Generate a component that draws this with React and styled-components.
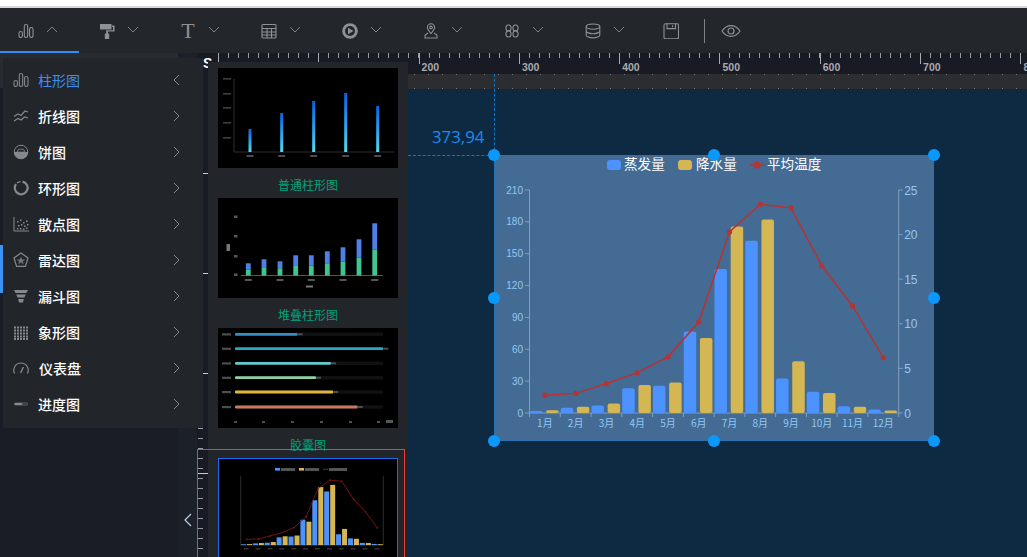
import React from "react";
import styled, { createGlobalStyle } from "styled-components";

const Global = createGlobalStyle`
  html, body { margin: 0; padding: 0; background: #181b24; }
  * { box-sizing: border-box; }
`;
const CJK = `"Noto Sans CJK SC", "Liberation Sans", sans-serif`;

const Page = styled.div`
  width: 1027px; height: 557px; overflow: hidden; display: flex; flex-direction: column;
  background: #fff; font-family: ${CJK};
`;
const TopStrip = styled.div`height: 8px; flex: none; background: #fff; border-bottom: 2px solid #d6d6d6;`;
const Toolbar = styled.div`
  height: 45px; flex: none; display: flex; align-items: stretch; background: #23262a; color: #8e9195;
`;
const ToolItem = styled.div`
  position: relative; width: 81px; flex: none; display: flex; align-items: center; gap: 12px;
  padding: 0 0 0 18px;
  ${p => p.$active && `&::after { content: ""; position: absolute; left: 0; bottom: 0; width: 79px; height: 2px; background: #2f8ff0; }`}
`;
const ToolIcon = styled.svg`width: ${p => p.$w || 16}px; height: 16px; flex: none; display: block;`;
const SerifT = styled.span`
  width: 16px; flex: none; text-align: center; font: 22px/16px "Liberation Serif", serif; color: #8e9195;
`;
const Caret = styled.svg`width: 12px; height: 7px; flex: none; margin-top: -3px; display: block;`;
const Divider = styled.div`width: 1px; height: 24px; background: #7e8185; align-self: center; margin-left: 25px;`;
const EyeItem = styled.div`display: flex; align-items: center; padding-left: 16px;`;
const SaveItem = styled.div`display: flex; align-items: center; padding-left: 15px;`;

const Workspace = styled.div`position: relative; flex: 1; display: flex; min-height: 0; background: #181b24;`;
const LeftRail = styled.div`position: relative; width: 178px; flex: none; background: #1a1d26;`;
const RailHead = styled.div`height: 35px; background: #282b32;`;
const RailMark = styled.div`position: absolute; left: 0; top: 192px; width: 3px; height: 48px; background: #3a93f2;`;
const CollapseRail = styled.div`
  width: 19px; flex: none; background: #1c2028; display: flex; justify-content: center; align-items: flex-end; padding-bottom: 30px;
`;
const Menu = styled.nav`
  position: absolute; left: 3px; top: 5px; width: 200px; height: 370px; z-index: 5;
  background: #22262a; padding-top: 4px; display: flex; flex-direction: column;
`;
const MenuRow = styled.div`
  height: 36px; flex: none; display: flex; align-items: center; padding: 0 23px 0 10px; color: ${p => (p.$active ? "#3a90ee" : "#fff")};
`;
const MenuIcon = styled.svg`width: 16px; height: 16px; flex: none; color: #85888c; display: block;`;
const MenuLabel = styled.span`
  flex: 1; font-size: 14px; line-height: 20px; margin-left: ${p => (p.$wide ? "10px" : "9px")}; font-weight: ${p => (p.$active ? 400 : 500)};
`;
const MenuChevron = styled.svg`width: 7px; height: 12px; flex: none; display: block; margin-top: -1px;`;

const Stage = styled.div`
  position: relative; flex: 1; min-width: 0; display: grid;
  grid-template-columns: 21px 1fr; grid-template-rows: 21px 15px 1fr;
`;
const Corner = styled.div`
  background: #181a24; color: #fff; font: bold 14px/14px "Liberation Sans", sans-serif; padding: 3px 0 0 6px; overflow: hidden;
`;
const TopRuler = styled.div`background: #181a24; display: flex; overflow: hidden;`;
const RulerSeg = styled.div`
  position: relative; width: 100.3px; flex: none; padding: 8px 0 0 3px;
  font: bold 10.5px/12px "Liberation Sans", sans-serif; color: #a9abae; 
  background: repeating-linear-gradient(90deg, #9a9ca0 0 1px, transparent 1px 10.03px) 0 0 / 100% 5px no-repeat;
  &::before { content: ""; position: absolute; left: 0; top: 0; width: 1px; height: 11px; background: #a9abae; }
`;
const LeftRuler = styled.div`
  grid-row: 2 / 4; background: #181a24;
  background-image:
    repeating-linear-gradient(180deg, #c9cacc 0 1px, transparent 1px 100px),
    repeating-linear-gradient(180deg, #9a9ca0 0 1px, transparent 1px 10px);
  background-size: 10px 100%, 5px 100%;
  background-position: 1px -1px, 1px 4px;
  background-repeat: no-repeat;
`;
const Band = styled.div`
  background-color: #2c2d31;
  background-image:
    repeating-linear-gradient(90deg, #7a7b7e 0 1px, transparent 1px 14px),
    repeating-linear-gradient(90deg, #7a7b7e 0 1px, transparent 1px 14px);
  background-size: 100% 1px, 100% 1px;
  background-position: 0 0, 0 14px;
  background-repeat: no-repeat;
`;
const Canvas = styled.div`position: relative; background: #0e2a43;`;
const GuideV = styled.div`
  position: absolute; left: 276px; top: -15px; height: 81px; border-left: 1px dashed #1377c0;
`;
const GuideH = styled.div`
  position: absolute; left: 190px; top: 66px; width: 86px; border-top: 1px dashed #1377c0;
`;
const Coord = styled.div`
  position: absolute; left: 214px; top: 36px; font: 16.8px/24px "Open Sans", "Liberation Sans", sans-serif; color: #1a8cf0;
`;
const Widget = styled.div`
  position: absolute; left: 276px; top: 66px; width: 440px; height: 286px; background: #436b93;
  outline: 1px dashed #1a78c4; outline-offset: -1px;
`;
const ChartSvg = styled.svg`position: absolute; left: 0; top: 0; width: 440px; height: 286px; display: block;`;
const Handle = styled.div`
  position: absolute; left: ${p => p.$x}%; top: ${p => p.$y}%; width: 12px; height: 12px; margin: -6px 0 0 -6px;
  border-radius: 50%; background: #0a98fb;
`;

const ThumbPanel = styled.aside`
  position: absolute; left: 11px; top: 9px; bottom: 0; width: 200px; background: #22262a; z-index: 4;
  display: flex; flex-direction: column; padding-top: 6px;
`;
const Thumb = styled.div`
  flex: none; width: 180px; margin-left: 10px; height: 130px; display: flex; flex-direction: column; align-items: center;
`;
const ThumbBox = styled.svg`
  width: 180px; height: 100px; flex: none; display: block; background: #000;
  & > * { filter: blur(0.4px); }
`;
const ThumbLabel = styled.div`
  font-size: 12px; line-height: 18px; margin-top: 8px; color: #00a278;
`;
const SelectedOutline = styled.div`
  position: absolute; left: -11px; top: 387px; width: 208px; bottom: -4px; border: 1px solid #ee3c3c; z-index: 6; pointer-events: none;
`;
const SelectedBox = styled(ThumbBox)`
  outline: 1px solid #1a6fe8; outline-offset: -1px;
`;

const evap = [2.0, 4.9, 7.0, 23.2, 25.6, 76.7, 135.6, 162.2, 32.6, 20.0, 6.4, 3.3];
const rain = [2.6, 5.9, 9.0, 26.4, 28.7, 70.7, 175.6, 182.2, 48.7, 18.8, 6.0, 2.3];
const temp = [2.0, 2.2, 3.3, 4.5, 6.3, 10.2, 20.3, 23.4, 23.0, 16.5, 12.0, 6.2];
const months = ["1月","2月","3月","4月","5月","6月","7月","8月","9月","10月","11月","12月"];

const AX = "#7f9fc0", LBL = "#93c8f5";
function MainChart() {
  const L = 529.5, R = 898.7, T = 190, B = 413;
  const band = (R - L) / 12;
  const yL = v => B - (v / 210) * (B - T);
  const yR = v => B - (v / 25) * (B - T);
  const pts = temp.map((t, i) => [L + band * (i + 0.5), yR(t)]);
  return (
    <ChartSvg viewBox="494 155 440 286">
      <rect x="607" y="160" width="14" height="10" rx="3" fill="#4c93ff" />
      <text x="624" y="169" fontSize="13.6" fill="#fff" fontFamily={CJK}>蒸发量</text>
      <rect x="678" y="160" width="14" height="10" rx="3" fill="#d4b653" />
      <text x="696" y="169" fontSize="13.6" fill="#fff" fontFamily={CJK}>降水量</text>
      <line x1="750" x2="764" y1="165" y2="165" stroke="#b83232" strokeWidth="1.5" />
      <circle cx="757" cy="165" r="3.5" fill="#b83232" />
      <text x="767" y="169" fontSize="13.6" fill="#fff" fontFamily={CJK}>平均温度</text>

      {[0, 30, 60, 90, 120, 150, 180, 210].map(v => (
        <g key={v}>
          <line x1="525" x2={L} y1={yL(v)} y2={yL(v)} stroke={AX} />
          <text x="523" y={yL(v) + 3.5} fontSize="10" textAnchor="end" fill={LBL} fontFamily="Liberation Sans, sans-serif">{v}</text>
        </g>
      ))}
      {[0, 5, 10, 15, 20, 25].map(v => (
        <g key={v}>
          <line x1={R} x2={R + 4} y1={yR(v)} y2={yR(v)} stroke={AX} />
          <text x={R + 5.5} y={yR(v) + 4.5} fontSize="12" fill={LBL} fontFamily="Liberation Sans, sans-serif">{v}</text>
        </g>
      ))}
      <line x1={L} x2={L} y1={T} y2={B} stroke={AX} strokeWidth="1" />
      <line x1={R} x2={R} y1={T} y2={B} stroke={AX} strokeWidth="1" />
      <line x1={L} x2={R} y1={B} y2={B} stroke={AX} strokeWidth="1" />
      {months.map((m, i) => (
        <g key={m}>
          <line x1={L + band * i} x2={L + band * i} y1={B} y2={B + 4} stroke={AX} />
          <text x={L + band * (i + 0.5)} y="427" fontSize="10" textAnchor="middle" fill={LBL} fontFamily={CJK}>{m}</text>
        </g>
      ))}
      <line x1={R} x2={R} y1={B} y2={B + 4} stroke={AX} />
      {months.map((m, i) => (
        <g key={m}>
          <rect x={L + band * i + 0.4} y={yL(evap[i])} width="12.5" height={B - yL(evap[i])} rx="2" fill="#4c93ff" />
          <rect x={L + band * i + 16.6} y={yL(rain[i])} width="12.5" height={B - yL(rain[i])} rx="2" fill="#d4b653" />
        </g>
      ))}
      <polyline points={pts.map(p => p.join(",")).join(" ")} fill="none" stroke="#b83232" strokeWidth="1.5" />
      {pts.map((p, i) => <circle key={i} cx={p[0]} cy={p[1]} r="2.6" fill="#b83232" />)}
    </ChartSvg>
  );
}

function MiniMixed() {
  const L = 22.7, R = 165.3, T = 17.7, B = 87;
  const band = (R - L) / 12;
  const yL = v => B - (v / 210) * (B - T);
  const yR = v => B - (v / 25) * (B - T);
  const pts = temp.map((t, i) => [L + band * (i + 0.5), yR(t)]);
  return (
    <SelectedBox viewBox="0 0 180 100">
      <rect x="57" y="10" width="5" height="2.6" fill="#4c93ff" />
      <rect x="81" y="10" width="5" height="2.6" fill="#d4b653" />
      <line x1="105" x2="110" y1="11.3" y2="11.3" stroke="#8a1f1f" />
      <g fill="#555"><rect x="63" y="10" width="14" height="3" /><rect x="87" y="10" width="14" height="3" /><rect x="111" y="10" width="18" height="3" /></g>
      <line x1={L} x2={L} y1={T} y2={B} stroke="#2a2c2e" />
      <line x1={R} x2={R} y1={T} y2={B} stroke="#2a2c2e" />
      <line x1={L} x2={R} y1={B} y2={B} stroke="#444" />
      {months.map((m, i) => (
        <g key={m}>
          <rect x={L + band * i + 0.3} y={yL(evap[i])} width="5" height={B - yL(evap[i])} fill="#4c93ff" />
          <rect x={L + band * i + 6.3} y={yL(rain[i])} width="5" height={B - yL(rain[i])} fill="#d4b653" />
          <rect x={L + band * i + 3} y="90" width="5" height="1.5" fill="#333" />
        </g>
      ))}
      <polyline points={pts.map(p => p.join(",")).join(" ")} fill="none" stroke="#7a1616" strokeWidth="0.9" />
      {pts.map((p, i) => <circle key={i} cx={p[0]} cy={p[1]} r="0.9" fill="#7a1616" />)}
    </SelectedBox>
  );
}

function ThumbBars() {
  const xs = [32, 63.7, 95.7, 127.7, 159.7], tops = [61, 45, 33, 25, 38];
  return (
    <ThumbBox viewBox="0 0 180 100">
      <defs>
        <linearGradient id="tb" x1="0" y1="0" x2="0" y2="1">
          <stop offset="0" stopColor="#0a5fe6" /><stop offset="1" stopColor="#52dcf0" />
        </linearGradient>
      </defs>
      <line x1="16" x2="16" y1="11" y2="84" stroke="#2a2e32" />
      <line x1="16" x2="176" y1="84" y2="84" stroke="#2a2e32" />
      {[11, 26, 40, 55, 70].map(y => <rect key={y} x="5" y={y - 1} width="8" height="1.6" fill="#3c4044" />)}
      {xs.map((x, i) => (
        <g key={x}>
          <rect x={x - 1.5} y={tops[i]} width="3" height={84 - tops[i]} fill="url(#tb)" />
          <rect x={x - 3.5} y="87" width="7" height="2" fill="#4a4d50" />
        </g>
      ))}
    </ThumbBox>
  );
}

function ThumbStack() {
  const xs = [30.3, 46, 62, 77.7, 93.3, 109.3, 125, 141, 156.7];
  const bt = [65.3, 61.3, 63.3, 57.3, 57.3, 53.3, 49.3, 41.3, 25.3];
  const gt = [71.7, 69.3, 70.3, 67.3, 67.7, 65.3, 63.7, 59.7, 51.7];
  return (
    <ThumbBox viewBox="0 0 180 100">
      <line x1="23" x2="165" y1="77.5" y2="77.5" stroke="#55585a" />
      {[18.5, 38, 58, 76.5].map(y => <rect key={y} x="16" y={y - 1} width="3.5" height="2.5" fill="#55585a" />)}
      <rect x="8.5" y="46" width="3.5" height="7" fill="#777" />
      {xs.map((x, i) => (
        <g key={x}>
          <rect x={x - 2.4} y={bt[i]} width="4.8" height={gt[i] - bt[i]} fill="#4f80e6" />
          <rect x={x - 2.4} y={gt[i]} width="4.8" height={77.5 - gt[i]} fill="#42c490" />
        </g>
      ))}
      {[30.3, 62, 93.3, 125, 156.7].map(x => <rect key={x} x={x - 3.5} y="81" width="7" height="2" fill="#55585a" />)}
      <rect x="88" y="87.5" width="7" height="2" fill="#777" />
    </ThumbBox>
  );
}

function ThumbCapsule() {
  const ys = [6.3, 20.7, 35.3, 49.7, 64, 79];
  const ends = [79.7, 165.3, 113, 98, 115.3, 139.7];
  const cols = ["#2f8fc0", "#27a7c8", "#62c8c8", "#8fd0a5", "#e0b63f", "#c77a60"];
  return (
    <ThumbBox viewBox="0 0 180 100">
      {ys.map((y, i) => (
        <g key={y}>
          <rect x="4" y={y - 1} width="9" height="2.2" fill="#4c4e50" />
          <rect x="17" y={y - 1.8} width="148.3" height="3.6" rx="1.5" fill="#101112" />
          <rect x="17" y={y - 1.4} width={ends[i] - 17} height="2.8" rx="1.2" fill={cols[i]} />
          <rect x={ends[i]} y={y - 1} width="5" height="2" fill="#4c4e50" />
        </g>
      ))}
      {[17, 45, 74, 103, 132, 160].map(x => <rect key={x} x={x - 1} y="93" width="3" height="2" fill="#4c4e50" />)}
      <rect x="168" y="92" width="7" height="3" fill="#55585a" />
    </ThumbBox>
  );
}

const S = { fill: "none", stroke: "currentColor", strokeWidth: 1.1 };
const BarsGlyph = () => (
  <g {...S}>
    <rect x="1" y="8.5" width="3.4" height="6" rx="1.7" />
    <rect x="6.3" y="1.5" width="3.4" height="13" rx="1.7" />
    <rect x="11.6" y="4.5" width="3.4" height="10" rx="1.7" />
  </g>
);

const ToolGlyphs = {
  bars: <BarsGlyph />,
  roller: (
    <g fill="currentColor">
      <path d="M1 1h11.5v5.5H1z" />
      <path d="M13 2.6h2.5v6H9V11H7.2V7.2h6.8V4h-1z" />
      <rect x="5.8" y="10.5" width="4.4" height="5.5" rx="0.5" />
    </g>
  ),
  table: (
    <g {...S}>
      <rect x="1" y="1.5" width="14" height="13.5" rx="1" />
      <path d="M1 5.5h14M1 9h14M1 12h14M6 5.5V15M10.5 5.5V15" />
    </g>
  ),
  play: (
    <g>
      <circle cx="8" cy="8" r="7.8" fill="currentColor" />
      <circle cx="8" cy="8" r="5" fill="#23262a" />
      <path d="M6 4.8 11.5 8 6 11.2z" fill="currentColor" />
    </g>
  ),
  pin: (
    <g {...S}>
      <path d="M8 10.5C5.8 7.8 4.4 6.2 4.4 4.4a3.6 3.6 0 0 1 7.2 0c0 1.8-1.4 3.4-3.6 6.1z" />
      <circle cx="8" cy="4.4" r="1.3" />
      <path d="M5 10 2 12.2V15h12v-2.8L11 10" />
    </g>
  ),
  eights: (
    <g {...S}>
      <rect x="2" y="2" width="5" height="5.8" rx="2.4" />
      <rect x="2" y="8" width="5" height="6" rx="2.4" />
      <rect x="9" y="2" width="5" height="5.8" rx="2.4" />
      <rect x="9" y="8" width="5" height="6" rx="2.4" />
    </g>
  ),
  db: (
    <g {...S}>
      <ellipse cx="8" cy="3.6" rx="6.8" ry="2.6" />
      <path d="M1.2 3.6v8.6c0 1.4 3 2.7 6.8 2.7s6.8-1.3 6.8-2.7V3.6M1.2 8c0 1.4 3 2.7 6.8 2.7s6.8-1.3 6.8-2.7" />
    </g>
  ),
  save: (
    <g {...S}>
      <rect x="1" y="0.8" width="14.5" height="15" rx="1.5" />
      <path d="M4 1v4.6h8.5V1M9.6 2.3v2" />
    </g>
  ),
};

const MenuGlyphs = {
  bars: <BarsGlyph />,
  line: (
    <g {...S} strokeWidth="1.2">
      <path d="M1 8.5 5 6l3 1.5L12 3l3 1" />
      <path d="M1 13l4-2.5 3 1.5 3.5-3 3.5 1" />
    </g>
  ),
  pie: (
    <g>
      <circle cx="8" cy="8" r="6.8" fill="none" stroke="currentColor" />
      <path d="M1 8h14a7 7 0 0 1-14 0z" fill="currentColor" />
      <path d="M4 8a4 3 0 0 1 8 0z" fill="none" stroke="currentColor" strokeWidth="0.8" />
    </g>
  ),
  ring: (
    <g fill="none" stroke="currentColor" strokeWidth="2.2">
      <path d="M9.5 1.6A6.4 6.4 0 1 1 3 4.2" />
      <path d="M4 3a6.4 6.4 0 0 1 3.4-1.4" strokeWidth="1.4" />
    </g>
  ),
  scatter: (
    <g>
      <path d="M1 1v14h15" fill="none" stroke="currentColor" />
      <g fill="currentColor">
        {[[4,5],[7,3.5],[10,6],[13,4.5],[5,9],[8,8],[11,9.5],[14,8],[4,12],[7,12],[10,12.5],[13,11.5]].map(([x, y]) => <rect key={x + "-" + y} x={x} y={y} width="1.5" height="1.5" />)}
      </g>
    </g>
  ),
  radar: (
    <g fill="none" stroke="currentColor">
      <path d="M8 1 15 6l-2.6 8.4H3.6L1 6z" strokeWidth="1.2" />
      <path d="M8 4.5 9.2 7.6h3.2L9.8 9.4l1 3L8 10.6 5.2 12.4l1-3-2.6-1.8h3.2z" fill="currentColor" stroke="none" opacity="0.8" />
    </g>
  ),
  funnel: (
    <g fill="currentColor">
      <path d="M1 2h14l-1.6 3H2.6z" />
      <path d="M3.2 6.5h9.6L11.4 9.6H4.6z" />
      <path d="M5.2 11h5.6L10 14.5H6z" />
    </g>
  ),
  pict: (
    <g fill="currentColor">
      {[2.5, 5.5, 8.5, 11.5, 14].map(y => [1, 4, 7, 10, 13].map(x => <rect key={x + "-" + y} x={x} y={y} width="2" height="2" />))}
    </g>
  ),
  gauge: (
    <g fill="none" stroke="currentColor" strokeWidth="1.2">
      <path d="M1.6 13.5A7.2 7.2 0 1 1 14.4 13.5" />
      <path d="M7.6 13 10.4 7" strokeWidth="1.4" />
    </g>
  ),
  progress: (
    <g>
      <rect x="1.5" y="7" width="13" height="2" rx="1" fill="none" stroke="currentColor" strokeWidth="0.6" />
      <rect x="1.5" y="7" width="8" height="2" rx="1" fill="currentColor" />
    </g>
  ),
};

const menu = [
  ["bars", "柱形图", true], ["line", "折线图"], ["pie", "饼图"], ["ring", "环形图"], ["scatter", "散点图"],
  ["radar", "雷达图"], ["funnel", "漏斗图"], ["pict", "象形图"], ["gauge", "仪表盘"], ["progress", "进度图"],
];
const tools = ["bars", "roller", "T", "table", "play", "pin", "eights", "db"];
const handles = [[0, 0], [50, 0], [100, 0], [0, 50], [100, 50], [0, 100], [50, 100], [100, 100]];

export default function App() {
  return (
    <Page>
      <Global />
      <TopStrip />
      <Toolbar>
        {tools.map((t, i) => (
          <ToolItem key={t} $active={i === 0}>
            {t === "T" ? <SerifT>T</SerifT> : <ToolIcon viewBox="0 0 16 16">{ToolGlyphs[t]}</ToolIcon>}
            <Caret viewBox="0 0 12 7">
              <path d={i === 0 ? "M1 6 6 1l5 5" : "M1 1l5 5 5-5"} fill="none" stroke="#7d8084" strokeWidth="1" />
            </Caret>
          </ToolItem>
        ))}
        <SaveItem><ToolIcon viewBox="0 0 16 16">{ToolGlyphs.save}</ToolIcon></SaveItem>
        <Divider />
        <EyeItem>
          <ToolIcon $w={20} viewBox="0 0 20 16">
            <path d="M1 8c2.4-3.6 5.4-5.4 9-5.4s6.6 1.8 9 5.4c-2.4 3.6-5.4 5.4-9 5.4S3.4 11.6 1 8z" fill="none" stroke="#8e9195" strokeWidth="1.2" />
            <circle cx="10" cy="8" r="3" fill="none" stroke="#8e9195" strokeWidth="1.2" />
          </ToolIcon>
        </EyeItem>
      </Toolbar>
      <Workspace>
        <LeftRail><RailHead /><RailMark /></LeftRail>
        <CollapseRail>
          <svg width="8" height="14" viewBox="0 0 8 14">
            <path d="M7 1 1 7l6 6" fill="none" stroke="#b9d4e6" strokeWidth="1.2" />
          </svg>
        </CollapseRail>
        <Menu>
          {menu.map(([g, label, active]) => (
            <MenuRow key={label} $active={active}>
              <MenuIcon viewBox="0 0 16 16">{MenuGlyphs[g]}</MenuIcon>
              <MenuLabel $wide={g === "gauge"} $active={active}>{label}</MenuLabel>
              <MenuChevron viewBox="0 0 7 12">
                <path d={active ? "M6 1 1 6l5 5" : "M1 1l5 5-5 5"} fill="none" stroke="#85888c" strokeWidth="1" />
              </MenuChevron>
            </MenuRow>
          ))}
        </Menu>
        <Stage>
          <Corner>S</Corner>
          <TopRuler>
            {[0, 100, 200, 300, 400, 500, 600, 700, 800].map(n => <RulerSeg key={n}>{n}</RulerSeg>)}
          </TopRuler>
          <LeftRuler />
          <Band />
          <Canvas>
            <GuideV />
            <GuideH />
            <Coord>373,94</Coord>
            <Widget>
              <MainChart />
              {handles.map(([x, y]) => <Handle key={x + "-" + y} $x={x} $y={y} />)}
            </Widget>
          </Canvas>
          <ThumbPanel>
            <Thumb><ThumbBars /><ThumbLabel>普通柱形图</ThumbLabel></Thumb>
            <Thumb><ThumbStack /><ThumbLabel>堆叠柱形图</ThumbLabel></Thumb>
            <Thumb><ThumbCapsule /><ThumbLabel>胶囊图</ThumbLabel></Thumb>
            <Thumb><MiniMixed /></Thumb>
            <SelectedOutline />
          </ThumbPanel>
        </Stage>
      </Workspace>
    </Page>
  );
}
